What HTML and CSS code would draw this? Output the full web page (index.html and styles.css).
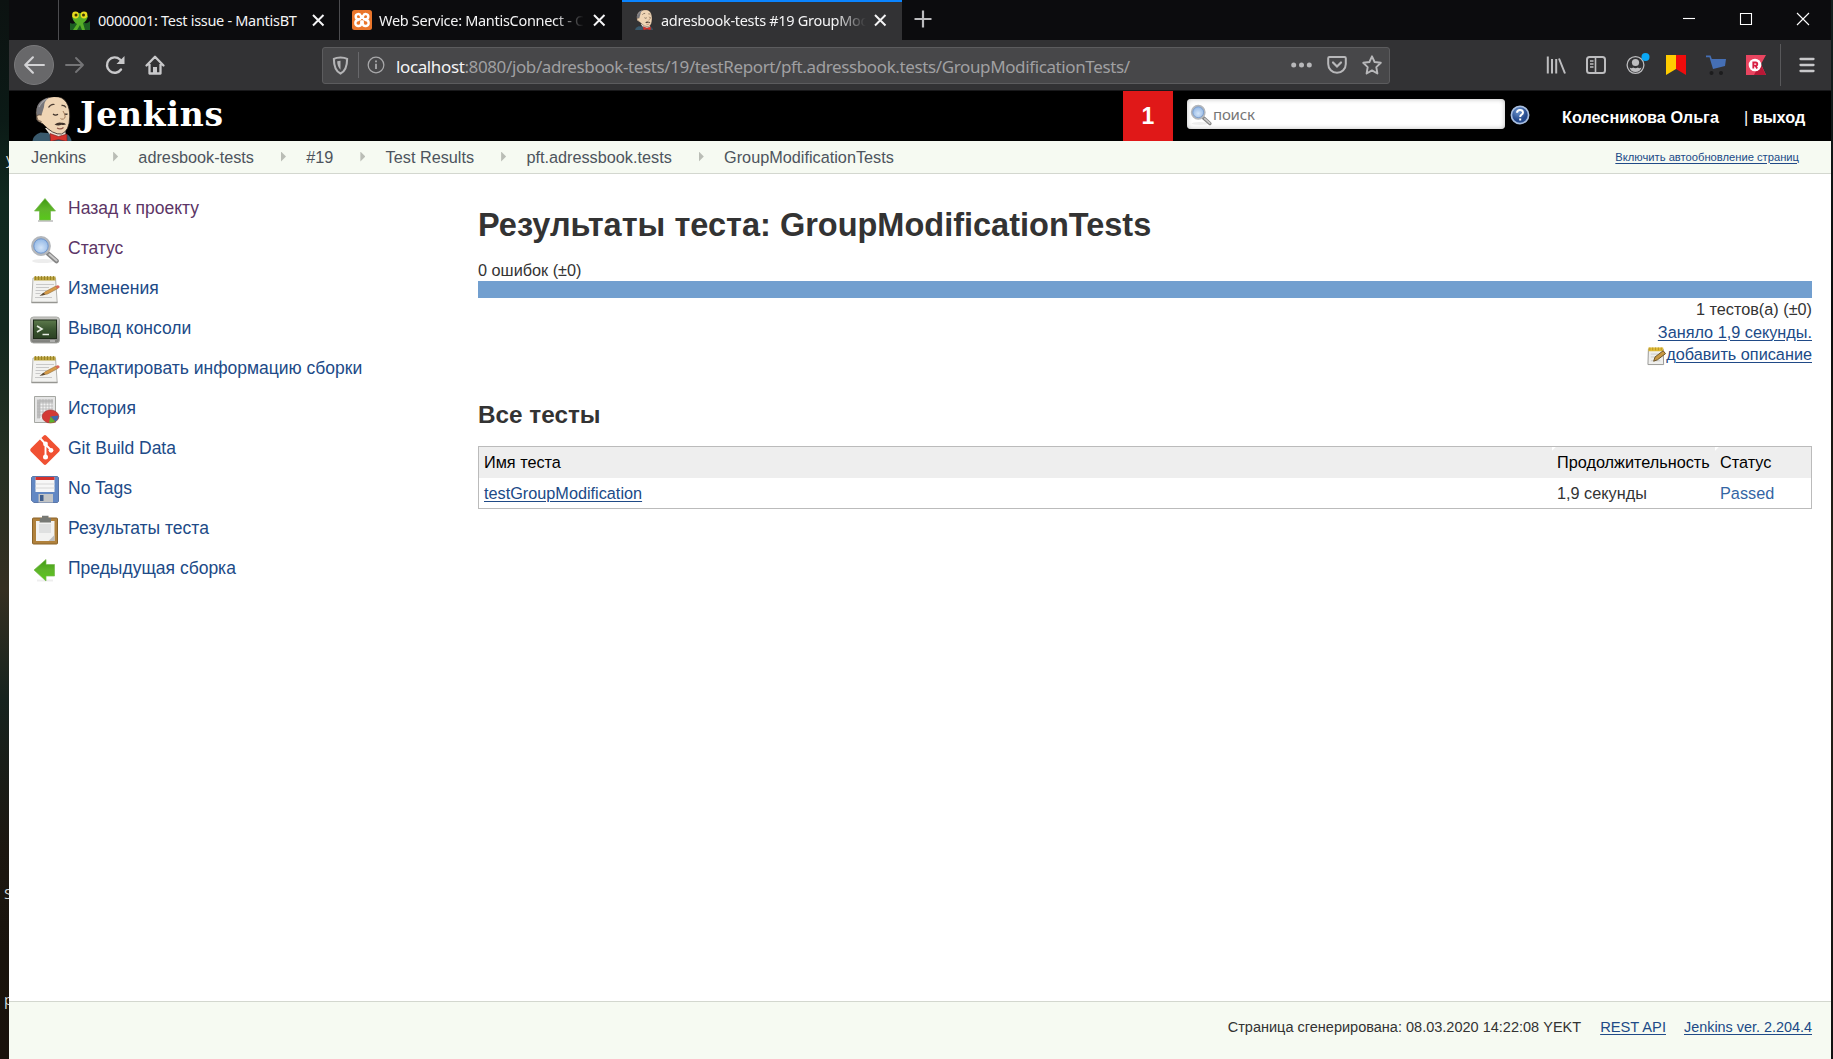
FILE: index.html
```html
<!DOCTYPE html>
<html lang="ru">
<head>
<meta charset="utf-8">
<title>adresbook-tests #19 GroupModificationTests</title>
<link rel="stylesheet" href="styles.css">
</head>
<body>
<svg class="defs" width="0" height="0">
  <defs>
    <linearGradient id="green" x1="0" y1="0" x2="0" y2="1"><stop offset="0" stop-color="#3f9a12"/><stop offset=".5" stop-color="#5fb52a"/><stop offset="1" stop-color="#58c81a"/></linearGradient>
    <radialGradient id="lens" cx=".5" cy=".6"><stop offset="0" stop-color="#d3e4f8"/><stop offset="1" stop-color="#94b9e6"/></radialGradient>
    <linearGradient id="term" x1="0" y1="0" x2="0" y2="1"><stop offset="0" stop-color="#5d7a4c"/><stop offset=".5" stop-color="#3b5630"/><stop offset="1" stop-color="#2b4123"/></linearGradient>
    <linearGradient id="steel" x1="0" y1="0" x2="0" y2="1"><stop offset="0" stop-color="#c8c8c4"/><stop offset="1" stop-color="#7c7d79"/></linearGradient>
    <radialGradient id="help" cx=".4" cy=".3"><stop offset="0" stop-color="#6f97cf"/><stop offset="1" stop-color="#24498c"/></radialGradient>
    <symbol id="i-glass" viewBox="0 0 30 30">
      <ellipse cx="13" cy="26" rx="11" ry="2" fill="#ededed"/>
      <path d="M18 18.5l8.5 7.500" stroke="#858585" stroke-width="4.600" stroke-linecap="round"/>
      <path d="M19.500 19.500l7 6" stroke="#c9c9c9" stroke-width="2" stroke-linecap="round"/>
      <circle cx="11" cy="11" r="8.600" fill="url(#lens)" stroke="#b4b7bb" stroke-width="2.600"/>
      <circle cx="11" cy="11" r="7.200" fill="none" stroke="#6f96cd" stroke-width="1"/>
    </symbol>
    <symbol id="i-note" viewBox="0 0 30 30">
      <path d="M3 3h22.500l1.700 24.500H1.700z" fill="#f2f2f0" stroke="#b4b4b0"/>
      <path d="M1.500 27.500h26" stroke="#969692" stroke-width="1.500"/>
      <path d="M4 1.500h21.500v4H4z" fill="#bda53f"/>
      <path d="M5.500 1v4M8.500 1v4M11.500 1v4M14.500 1v4M17.500 1v4M20.500 1v4M23.500 1v4" stroke="#8d7823" stroke-width=".8"/>
      <path d="M6 9.500h18M6 12.500h13M5.500 15.500h11M5.500 18.500h5M5 22.500h17" stroke="#c8c8c8"/>
      <path d="M12 20l3.500-3.500L26 11l1.800 2.500L17.500 19z" fill="#d79b48" stroke="#94703a" stroke-width=".6"/>
      <path d="M9.500 21l4-3.500 1.800 2.300z" fill="#5d4a33"/>
      <path d="M25.500 11.200l2-1q2.300 0 2 2.300l-2 1.300z" fill="#d9695c"/>
    </symbol>
    <symbol id="i-jenkins" viewBox="0 0 40 44" overflow="hidden">
      <path d="M.5 44q.5-6 8-8.500l27 2q3.500 2.500 4 6.500z" fill="#39596c"/>
      <path d="M13 31l7 9.500 14-.5-1-8z" fill="#ece4d8"/>
      <path d="M22-.5C34-1 38 9 37.700 20q-.2 14-8.200 17Q21 38 11 27l-3.500-2Q4 24 4.500 20 2 2 22-.5z" fill="#efd5b5" stroke="#2b2521" stroke-width=".8"/>
      <path d="M5 19Q2 4 17 .5q-5 3.500-5 9.500l-2.500 8z" fill="#77767a"/>
      <path d="M7 10q3-6 8-8" fill="none" stroke="#a5a5a8" stroke-width="1.200"/>
      <path d="M9.500 18q-5.500-1-4.500 3 .5 3.500 4.500 3.500" fill="#efd5b5" stroke="#5b493c" stroke-width=".9"/>
      <path d="M16.500 10.500q2.500-4 6-3M29.500 8.500q3-.5 4.500 2" fill="none" stroke="#4b3d33" stroke-width="1.300"/>
      <path d="M21 17q2.500 2 5 .2M32.500 16.800q1.700 1 3 0" fill="none" stroke="#3b2f28" stroke-width="1.300"/>
      <path d="M31 14q4 6.500.5 8-2 .6-3-.5" fill="none" stroke="#a17a5a"/>
      <path d="M22.500 27.500q4-3 7-1.700 3.500-.5 4.500 1.700-2.500.8-4.500.2-3.500 1.500-7-.2z" fill="#41332b"/>
      <path d="M25 31q3.500 2 6.500-.5" fill="none" stroke="#8f584a" stroke-width="1.100"/>
      <path d="M18 36.500l8.500 3 8.500-2.500v7.500l-8.500-2-8 2z" fill="#d5342d" stroke="#701b1b" stroke-width=".6"/>
    </symbol>
  </defs>
</svg>
<div class="desktop">
  <div class="wallpaper"><span class="wp wp-a">y</span><span class="wp wp-b">S</span><span class="wp wp-c">p</span></div>
  <div class="window">
    <div class="tabbar">
      <div class="tab-gap"></div>
      <div class="tab tab-first">
        <svg class="fav" viewBox="0 0 20 20"><path d="M0 20v-7q4 2 6-1h8q2 3 6-1v9z" fill="#1c5e22"/><path d="M2 6q8-6 16 0-1 5-5 7l2 7h-3l-2-5-3 5H3l4-6Q3 12 2 6z" fill="#56ae28"/><circle cx="5.500" cy="5" r="3.400" fill="#e8dc1d"/><circle cx="14" cy="5" r="3.400" fill="#e8dc1d"/><circle cx="6" cy="5" r="1.500" fill="#3a3505"/><circle cx="13.500" cy="5" r="1.500" fill="#3a3505"/></svg>
        <span class="tab-title">0000001: Test issue - MantisBT</span>
        <svg class="tab-x" viewBox="0 0 14 14"><path d="M2 2l10.500 10.500M12.500 2L2 12.500"/></svg>
      </div>
      <div class="tab">
        <svg class="fav" viewBox="0 0 20 20"><rect width="20" height="20" rx="2.500" fill="#ea762b"/><g fill="none" stroke="#fff" stroke-width="2.400" stroke-linecap="round" stroke-linejoin="round"><path d="M8 9.300H6.300a2.600 2.600 0 1 1 2.500-3.300l2.400 2.200M12 9.300h1.700a2.600 2.600 0 1 0-2.500-3.300L8.800 8.200"/><path d="M6.300 10a3 3 0 1 0 3 3.500v-2h1.400v2a3 3 0 1 0 3-3.500"/></g></svg>
        <span class="tab-title fade">Web Service: MantisConnect - Co</span>
        <svg class="tab-x" viewBox="0 0 14 14"><path d="M2 2l10.500 10.500M12.500 2L2 12.500"/></svg>
      </div>
      <div class="tab tab-active">
        <svg class="fav" viewBox="-2 0 44 44"><use href="#i-jenkins" width="40" height="44"/></svg>
        <span class="tab-title fade">adresbook-tests #19 GroupModif</span>
        <svg class="tab-x" viewBox="0 0 14 14"><path d="M2 2l10.500 10.500M12.500 2L2 12.500"/></svg>
      </div>
      <svg class="plus" viewBox="0 0 18 18"><path d="M9 .5v17M.5 9h17"/></svg>
      <div class="caption">
        <svg viewBox="0 0 14 14"><path d="M1 6.500h12"/></svg>
        <svg viewBox="0 0 14 14"><path d="M1.500 1.500h11v11h-11z"/></svg>
        <svg viewBox="0 0 14 14"><path d="M1 1l12 12M13 1L1 13"/></svg>
      </div>
    </div>
    <div class="toolbar">
      <div class="nav">
        <span class="back"><svg viewBox="0 0 20 20" width="22" height="22"><path d="M19 10H2M9 3l-7 7 7 7" fill="none" stroke="#d3d3d5" stroke-width="2" stroke-linecap="round" stroke-linejoin="round"/></svg></span>
        <svg class="fwd" viewBox="0 0 20 20"><path d="M1 10h17M11 3l7 7-7 7" fill="none" stroke="#747476" stroke-width="1.900" stroke-linecap="round" stroke-linejoin="round"/></svg>
        <svg class="reload" viewBox="0 0 20 20"><path d="M16 14.500A7.700 7.700 0 1 1 15 4.500l1.700 2" fill="none" stroke="#c8c8ca" stroke-width="2.400" stroke-linecap="round"/><path d="M19.500 1v8h-8z" fill="#c8c8ca"/></svg>
        <svg class="home" viewBox="0 0 20 20"><path d="M1.500 10.500L10 1.800l8.500 8.700M4.500 9v9.500h11V9" fill="none" stroke="#c8c8ca" stroke-width="2.300" stroke-linecap="round" stroke-linejoin="round"/><path d="M8 12h4v6H8z" fill="#c8c8ca"/></svg>
      </div>
      <div class="urlbar">
        <svg class="shield" viewBox="0 0 18 20"><path d="M9 1.500q4.500 0 7 1.500 0 12-7 15.500Q2 15 2 3q2.500-1.500 7-1.500z" fill="none" stroke="#b4b4b6" stroke-width="2.200"/><path d="M9 5v9.500Q5.500 11 5.500 5.500z" fill="#b4b4b6"/></svg>
        <i class="bar-sep"></i>
        <svg class="info" viewBox="0 0 20 20"><circle cx="10" cy="10" r="8.700" fill="none" stroke="#a8a8aa" stroke-width="1.400"/><path d="M10 8.500v6M10 5v2" stroke="#a8a8aa" stroke-width="2"/></svg>
        <span class="url"><b>localhost</b>:8080/job/adresbook-tests/19/testReport/pft.adressbook.tests/GroupModificationTests/</span>
        <svg class="dots" viewBox="0 0 21 6"><circle cx="2.700" cy="3" r="2.500"/><circle cx="10.500" cy="3" r="2.500"/><circle cx="18.300" cy="3" r="2.500"/></svg>
        <svg class="pocket" viewBox="0 0 20 20"><path d="M2.500 2h15q1.300 0 1.300 1.300V9a8.800 8.800 0 0 1-17.600 0V3.300Q1.200 2 2.500 2z" fill="none" stroke="#b8b8ba" stroke-width="2"/><path d="M6 7.500l4 4 4-4" fill="none" stroke="#b8b8ba" stroke-width="2.200" stroke-linecap="round"/></svg>
        <svg class="star" viewBox="0 0 20 20"><path d="M10 1.300l2.600 5.700 6.200.8-4.500 4.300 1.100 6.400L10 15.400l-5.400 3.100 1.100-6.400L1.200 7.800l6.200-.8z" fill="none" stroke="#b8b8ba" stroke-width="1.900" stroke-linejoin="round"/></svg>
      </div>
      <div class="tools">
        <svg viewBox="0 0 20 20"><path d="M1.800 1.500v17M6 4v14.500M10.200 4v14.500M13 3.500l6 15" fill="none" stroke="#bdbdbf" stroke-width="2"/></svg>
        <svg viewBox="0 0 20 20"><rect x="1" y="2" width="18" height="16" rx="2.500" fill="none" stroke="#bdbdbf" stroke-width="2"/><path d="M9.500 2v16" stroke="#bdbdbf" stroke-width="1.600"/><path d="M4 6h3.500M4 9h3.500M4 12h3.500" stroke="#bdbdbf" stroke-width="1.400"/></svg>
        <svg viewBox="0 0 20 20"><circle cx="9.500" cy="10" r="8.400" fill="none" stroke="#bdbdbf" stroke-width="1.300"/><circle cx="9.500" cy="7.500" r="3.600" fill="#bdbdbf"/><path d="M3.500 12.500q2.500 1.300 3.500 0 2.500 1.500 5 0 1 1.300 3.500 0-1.500 4.500-6 4.500t-6-4.500z" fill="#bdbdbf"/><circle cx="19.500" cy="2" r="4" fill="#0aa8f5"/></svg>
        <svg viewBox="0 0 20 20"><path d="M0 0h10v14L0 20z" fill="#fc0"/><path d="M10 0h10v20l-10-6z" fill="#f00c0c"/></svg>
        <svg viewBox="0 0 20 20"><path d="M0 .5h4.500l1.300 3.500H20l-1 7-12 3L3.500 2.200H0z" fill="#456fb5"/><circle cx="5.500" cy="18" r="2" fill="#1c1c1d"/><circle cx="15" cy="18" r="2" fill="#1c1c1d"/></svg>
        <svg viewBox="0 0 20 20"><path d="M0 0h20l-5 9 5 11H0z" fill="#e94560"/><path d="M14 8l6 12H8z" fill="#b81836"/><circle cx="9" cy="10" r="6.300" fill="#fff"/><path d="M7.300 13.500v-6h2.400a1.600 1.600 0 0 1 0 3.200H7.500m2 0l1.700 2.800" fill="none" stroke="#d81f43" stroke-width="1.800"/></svg>
        <i class="tool-sep"></i>
        <svg viewBox="0 0 20 20" class="burger"><path d="M3.500 4h13M3.500 10h13M3.500 16h13" stroke="#c8c8ca" stroke-width="2.300" stroke-linecap="round"/></svg>
      </div>
    </div>

    <header class="header">
      <svg class="mascot" viewBox="0 0 40 44"><use href="#i-jenkins" width="40" height="44"/></svg>
      <span class="brand">Jenkins</span>
      <span class="alert">1</span>
      <div class="search"><svg viewBox="0 0 28 28"><use href="#i-glass" width="30" height="30"/></svg><span>поиск</span></div>
      <svg class="help" viewBox="0 0 20 20"><circle cx="10" cy="10" r="8.600" fill="url(#help)" stroke="#a9bfe0" stroke-width="1.700"/><path d="M7 7.800q.2-2.800 3-2.800t3 2.500q0 1.500-1.700 2.400-1.100.7-1.100 2M10.200 13.500v2" fill="none" stroke="#fff" stroke-width="2"/></svg>
      <b class="user">Колесникова Ольга</b>
      <span class="logout">| <b>выход</b></span>
    </header>
    <nav class="crumbs">
      <span>Jenkins</span><i></i><span>adresbook-tests</span><i></i><span>#19</span><i></i><span>Test Results</span><i></i><span>pft.adressbook.tests</span><i></i><span>GroupModificationTests</span>
      <a class="auto">Включить автообновление страниц</a>
    </nav>

    <div class="page">
      <aside class="side">
        <a class="visited"><svg viewBox="0 0 30 30"><path d="M8 26h15" stroke="#ccc" stroke-width="2"/><path d="M15 3.500L25.500 16h-5v9h-11v-9h-5z" fill="url(#green)" stroke="#75b84d" stroke-width=".7"/></svg>Назад к проекту</a>
        <a class="visited"><svg viewBox="0 0 30 30"><use href="#i-glass" width="30" height="30"/></svg>Статус</a>
        <a><svg viewBox="0 0 30 30"><use href="#i-note" width="30" height="30"/></svg>Изменения</a>
        <a><svg viewBox="0 0 30 30"><rect x=".5" y="2" width="29" height="26" rx="3" fill="url(#steel)" stroke="#a9aaa6"/><rect x="3.500" y="5" width="23" height="18.500" fill="url(#term)" stroke="#1d2a18"/><path d="M7 11l5 3-5 3" fill="none" stroke="#e8eee4" stroke-width="1.600"/><path d="M12.500 19.500h6.500" stroke="#e8eee4" stroke-width="1.500"/><path d="M20 26h5" stroke="#ddd"/></svg>Вывод консоли</a>
        <a><svg viewBox="0 0 30 30"><use href="#i-note" width="30" height="30"/></svg>Редактировать информацию сборки</a>
        <a><svg viewBox="0 0 30 30"><path d="M4.500 1.500h21v26h-21z" fill="#e5e5e5" stroke="#a5a7a2"/><path d="M7 4.500h16v19H7z" fill="#f2f2f2"/><path d="M7 4.500h16v3H7zM7 4.500h3v19H7z" fill="#bdbdbd"/><path d="M7 8h16M7 11h16M7 14h16M7 17h16M7 20h16M10 4v19M13 4v19M16 4v19M19 4v19M22 4v19" stroke="#b4b4b4" stroke-width=".8"/><ellipse cx="20.500" cy="21.500" rx="8.300" ry="6.500" fill="#d33a35" stroke="#9f2623" stroke-width=".6"/><path d="M20.500 21.500l8-1q0 4-3 6z" fill="#3f69aa"/><path d="M20.500 21.500l4.500 5q-3 2-6 1z" fill="#5cb02e"/></svg>История</a>
        <a><svg viewBox="0 0 30 30"><path d="M13.600.8q1.400-1.400 2.800 0l12.800 12.800q1.400 1.400 0 2.800L16.400 29.200q-1.400 1.400-2.800 0L.8 16.400q-1.400-1.400 0-2.800z" fill="#f05133"/><path d="M10.500 3.500l5 5.500v12.500M15.500 9.500l5 5" fill="none" stroke="#fff" stroke-width="1.900"/><circle cx="15.500" cy="9" r="2.400" fill="#fff"/><circle cx="15.500" cy="22" r="2.500" fill="#fff"/><circle cx="21" cy="15.300" r="2.400" fill="#fff"/></svg>Git Build Data</a>
        <a><svg viewBox="0 0 30 30"><path d="M2.500 1.500h25l1 1v24l-1 1H4l-2.500-2V2.500z" fill="#6288c4" stroke="#5b77a8"/><path d="M5.500 2h19v15h-19z" fill="#f7f7f7"/><path d="M5.500 2h19v3h-19z" fill="#d5322d"/><path d="M5.500 9h19M5.500 13h19" stroke="#d7d7d7"/><path d="M8.500 19H23v8.500H8.500z" fill="#c3c5c6"/><path d="M10 20h3.500v6H10z" fill="#3f5d8c"/></svg>No Tags</a>
        <a><svg viewBox="0 0 30 30"><rect x="2.500" y="3" width="25" height="26" rx="1" fill="#b0813c" stroke="#8a6329"/><path d="M6 6h18.500v20H6z" fill="#f2f2f1"/><path d="M9 9h12v9H9z" fill="#dfe0e0"/><path d="M24.500 20v6h-6z" fill="#bdbdbd"/><path d="M10 3h2V.8h6.500V3H21v4.500H9.500z" fill="#777975"/></svg>Результаты теста</a>
        <a><svg viewBox="0 0 30 30"><path d="M7 25.500h16" stroke="#eee" stroke-width="2"/><path d="M4 15L16 4.500v5h8.500V21H16v5z" fill="url(#green)" stroke="#75b84d" stroke-width=".7"/></svg>Предыдущая сборка</a>
      </aside>
      <main class="main">
        <h1>Результаты теста: GroupModificationTests</h1>
        <div class="fails">0 ошибок (±0)</div>
        <div class="bar"></div>
        <div class="stats">
          <span>1 тестов(а) (±0)</span>
          <a>Заняло 1,9 секунды.</a>
          <span class="desc"><svg viewBox="0 0 20 20"><path d="M1.500 2.500h15.500l.5 16.500H1z" fill="#efefed" stroke="#969692"/><path d="M1.500 1h15.500v4H1.500z" fill="#e2bd38"/><path d="M3 1v3M6 1v3M9 1v3M12 1v3M15 1v3" stroke="#a98b28" stroke-width=".8"/><path d="M4 8h8M4 11h6M4 15h10" stroke="#c9c9c9"/><path d="M7 15.500l1.500-4.500 8.500-6.500 2.500 3-8.500 6.500z" fill="#c79844" stroke="#695023"/></svg><a>добавить описание</a></span>
        </div>
        <h2>Все тесты</h2>
        <div class="table">
          <div class="row head"><span>Имя теста</span><span class="notch">Продолжительность</span><span class="notch">Статус</span></div>
          <div class="row"><span><a>testGroupModification</a></span><span>1,9 секунды</span><span class="passed">Passed</span></div>
        </div>
      </main>
    </div>
    <footer class="footer"><span>Страница сгенерирована: 08.03.2020 14:22:08 YEKT</span><a class="api">REST API</a><a class="ver">Jenkins ver. 2.204.4</a></footer>
  </div>
  <div class="edge"></div>
</div>
</body>
</html>
```
FILE: styles.css
```css
* { box-sizing: border-box; }
body { margin: 0; overflow: hidden; font: 16.25px/20px "Liberation Sans", Arial, sans-serif; color: #333; }
.defs { position: absolute; }
svg { display: block; flex: none; overflow: visible; }
.desktop { display: grid; grid-template-columns: 9px 1fr 2px; height: 1059px; }
.wallpaper { display: flex; flex-direction: column; overflow: hidden; background: linear-gradient(#0c1211 0, #0b1a16 120px, #10291f 200px, #14281f 330px, #253023 460px, #352f21 590px, #16231e 700px, #1d1710 850px, #19130c 950px, #1a120c); }
.wp { font: 15px/20px "Open Sans", sans-serif; color: #d6dade; padding-left: 6px; }
.wp-a { margin-top: 148px; }
.wp-b { margin-top: 715px; padding-left: 4px; }
.wp-c { margin-top: 86px; padding-left: 4px; }
.edge { background: linear-gradient(#14201f, #0c0d0d 30%, #2a251b 55%, #111); }
.window { display: flex; flex-direction: column; background: #fff; min-width: 0; }

.tabbar { display: flex; height: 40px; background: #0c0c0e; font: 14.5px/34px "Noto Sans", sans-serif; color: #f4f4f5; }
.tab-gap { width: 49px; }
.tab { display: flex; align-items: center; width: 283px; border-left: 1px solid #4c4c4f; padding-left: 12px; }
.tab-first { width: 281px; padding-left: 11px; }
.tab-first .tab-x { margin-left: 7px; }
.tab-active { width: 280px; border-left: 0; border-top: 2px solid #0a84ff; background: #323234; padding: 0 0 2px 12px; }
.fav { width: 20px; height: 20px; margin-right: 7px; }
.tab-first .fav { margin-right: 8px; }
.tab-title { flex: none; width: 207px; overflow: hidden; white-space: nowrap; letter-spacing: -.3px; }
.tab-first .tab-title { width: 206px; }
.fade { -webkit-mask-image: linear-gradient(90deg, #000 175px, transparent 205px); mask-image: linear-gradient(90deg, #000 175px, transparent 205px); }
.tab-x { width: 14px; height: 14px; margin-left: 6px; stroke: #f4f4f5; stroke-width: 2; }
.tab-active .tab-x { margin-left: 5px; }
.plus { width: 18px; height: 18px; margin: 10px 0 0 12px; stroke: #bcbcbe; stroke-width: 2.2; }
.caption { display: flex; gap: 43px; margin: 12px 21px 0 auto; }
.caption svg { width: 14px; height: 14px; fill: none; stroke: #fff; stroke-width: 1.1; }

.toolbar { display: flex; align-items: center; height: 50px; background: #323234; }
.nav { display: flex; align-items: center; width: 313px; padding-left: 5px; }
.back { display: flex; align-items: center; justify-content: center; width: 40px; height: 40px; border: 1px solid #7a7a7c; border-radius: 50%; background: #68686a; }
.fwd { width: 20px; height: 20px; margin-left: 11px; }
.reload { width: 20px; height: 20px; margin-left: 20px; }
.home { width: 20px; height: 20px; margin-left: 20px; }
.urlbar { display: flex; align-items: center; width: 1068px; height: 37px; border: 1px solid #5c5c5e; border-radius: 3px; background: #474749; }
.shield { width: 17px; height: 19px; margin-left: 9px; }
.bar-sep { width: 1px; height: 26px; margin-left: 9px; background: #68686b; }
.info { width: 18px; height: 18px; margin-left: 8px; }
.url { width: 895px; margin-left: 11px; padding-top: 3px; white-space: nowrap; font: 17px/24px "Noto Sans", sans-serif; letter-spacing: -.38px; color: #a0a0a2; }
.url b { font-weight: 400; color: #f4f4f5; }
.dots { width: 21px; height: 6px; fill: #b8b8ba; }
.pocket { width: 20px; height: 20px; margin-left: 15px; }
.star { width: 20px; height: 20px; margin-left: 15px; }
.tools { display: flex; align-items: center; gap: 20px; margin-left: 156px; }
.tools svg { width: 20px; height: 20px; }
.tool-sep { width: 1px; height: 42px; margin: 0 -5px 0 -6px; background: #58585a; }
.tools .burger { margin-left: 1px; }

.header { display: flex; height: 51px; border-top: 1px solid #19191b; background: #000; color: #fff; }
.mascot { width: 40px; height: 44px; margin: 6px 0 0 23px; }
.brand { width: 1044px; margin: 4px 0 0 7px; padding-left: 1px; font: bold 33px/40px "DejaVu Serif", serif; letter-spacing: .75px; }
.alert { width: 50px; height: 50px; background: #e01818; text-align: center; font: bold 23px/50px "Liberation Sans", sans-serif; }
.search { display: flex; align-items: center; width: 318px; height: 30px; margin: 8px 0 0 14px; padding-left: 3px; border-radius: 4px; background: #fff; box-shadow: inset 0 0 5px #bbb; color: #757575; font: 15px/30px "Noto Sans", sans-serif; letter-spacing: -.2px; }
.search svg { width: 21px; height: 21px; margin-right: 2px; }
.help { width: 20px; height: 20px; margin: 14px 0 0 5px; }
.user, .logout { font-size: 16.25px; line-height: 20px; margin-top: 16px; white-space: nowrap; }
.user { margin-left: 32px; width: 182px; }

.crumbs { display: flex; align-items: center; height: 33px; padding: 0 32px 1px 22px; border-bottom: 1px solid #d3d7cf; background: #f6faf2; color: #4d545d; white-space: nowrap; }
.crumbs i { width: 5px; height: 10px; margin: 0 20.25px 0 27px; background: #babdb6; clip-path: polygon(0 0, 100% 50%, 0 100%); }
.auto { margin-left: auto; font-size: 11.2px; }
a { color: #204a87; }
.auto, .stats a, .table a, .footer a { text-decoration: underline; text-underline-offset: 2px; text-decoration-thickness: 1px; }

.page { display: flex; flex: 1; }
.side { display: flex; flex-direction: column; width: 469px; padding: 15px 0 0 21px; font-size: 17.5px; }
.side a { display: flex; height: 40px; gap: 8px; line-height: 38px; white-space: nowrap; }
.side svg { width: 30px; height: 30px; margin-top: 6px; }
.side .visited { color: #5c3566; }
.main { flex: 1; padding-right: 19px; }
h1 { margin: 31px 0 0; font-size: 32.5px; line-height: 40px; white-space: nowrap; }
.fails { margin-top: 15px; height: 21px; }
.bar { height: 17px; background: #729fcf; }
.stats { display: flex; flex-direction: column; align-items: flex-end; line-height: 22.5px; }
.desc { display: flex; }
.desc svg { width: 19px; height: 20px; margin-top: 3px; }
h2 { margin: 35px 0 0; font-size: 24.3px; line-height: 28px; }
.table { margin-top: 17px; border: 1px solid #bbb; height: 63px; }
.row { display: grid; grid-template-columns: 1073px 163px 1fr; height: 30px; line-height: 31px; }
.row span { padding-left: 5px; }
.head { height: 31px; line-height: 31px; background: #eee; color: #000; }
.notch { background: linear-gradient(135deg, #fff 2.5px, transparent 3px); }
.passed { color: #3465a4; }
.footer { display: flex; height: 58px; border-top: 1px solid #d3d7cf; background: #f6faf2; padding: 15px 19px 0 0; justify-content: flex-end; font-size: 14.4px; white-space: nowrap; }
.footer span { font-size: 14.53px; }
.api { margin-left: 19px; font-size: 14.7px; }
.ver { margin-left: 18px; }
```
